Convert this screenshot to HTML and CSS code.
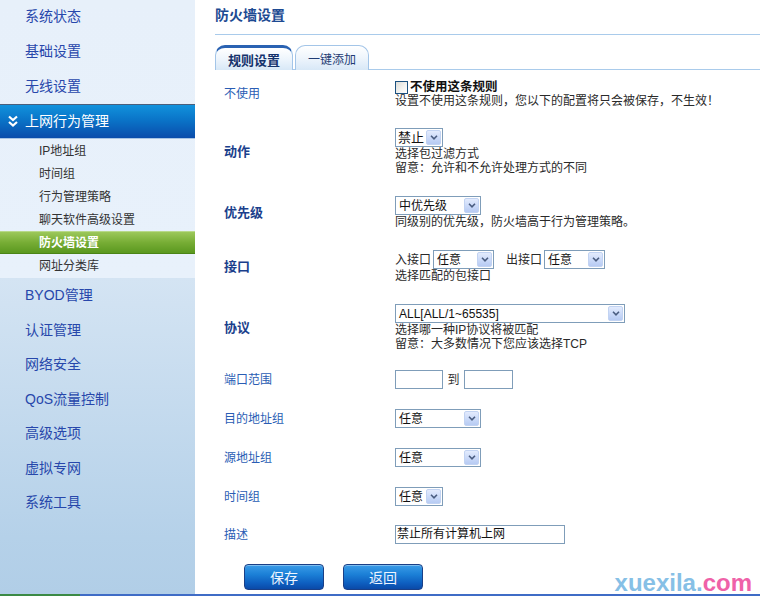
FILE: index.html
```html
<!DOCTYPE html>
<html lang="zh-CN">
<head>
<meta charset="utf-8">
<title>防火墙设置</title>
<link rel="stylesheet" href="styles.css">
</head>
<body>
<div class="page">
  <aside class="side">
    <ul class="menu menu-top">
      <li>系统状态</li>
      <li>基础设置</li>
      <li>无线设置</li>
    </ul>
    <div class="group-head">
      <svg class="dchev" width="10" height="12" viewBox="0 0 10 12"><path d="M1 1.5 L5 5 L9 1.5 M1 7 L5 10.5 L9 7" fill="none" stroke="#fff" stroke-width="2.2"/></svg>
      <span>上网行为管理</span>
    </div>
    <ul class="sub">
      <li>IP地址组</li>
      <li>时间组</li>
      <li>行为管理策略</li>
      <li>聊天软件高级设置</li>
      <li class="on">防火墙设置</li>
      <li>网址分类库</li>
    </ul>
    <ul class="menu menu-bottom">
      <li>BYOD管理</li>
      <li>认证管理</li>
      <li>网络安全</li>
      <li>QoS流量控制</li>
      <li>高级选项</li>
      <li>虚拟专网</li>
      <li>系统工具</li>
    </ul>
  </aside>

  <main class="content">
    <h1 class="title">防火墙设置</h1>
    <div class="tabs">
      <div class="tab active">规则设置</div>
      <div class="tab">一键添加</div>
    </div>

    <div class="form">
      <div class="row r1">
        <div class="label">不使用</div>
        <div class="val">
          <div class="check-line"><span class="checkbox"></span><b>不使用这条规则</b></div>
          <div>设置不使用这条规则，您以下的配置将只会被保存，不生效！</div>
        </div>
      </div>

      <div class="row r2">
        <div class="label strong">动作</div>
        <div class="val">
          <div class="sel w48"><span class="txt big">禁止</span><span class="arr"><svg width="8" height="5" viewBox="0 0 8 5"><path d="M1 0.8 L4 3.8 L7 0.8" fill="none" stroke="#4a5d80" stroke-width="1.6"/></svg></span></div>
          <div>选择包过滤方式</div>
          <div>留意：允许和不允许处理方式的不同</div>
        </div>
      </div>

      <div class="row r3">
        <div class="label strong">优先级</div>
        <div class="val">
          <div class="sel w86"><span class="txt">中优先级</span><span class="arr"><svg width="8" height="5" viewBox="0 0 8 5"><path d="M1 0.8 L4 3.8 L7 0.8" fill="none" stroke="#4a5d80" stroke-width="1.6"/></svg></span></div>
          <div>同级别的优先级，防火墙高于行为管理策略。</div>
        </div>
      </div>

      <div class="row r4">
        <div class="label strong">接口</div>
        <div class="val">
          <div class="iface">
            <span>入接口</span>
            <div class="sel w61"><span class="txt">任意</span><span class="arr"><svg width="8" height="5" viewBox="0 0 8 5"><path d="M1 0.8 L4 3.8 L7 0.8" fill="none" stroke="#4a5d80" stroke-width="1.6"/></svg></span></div>
            <span class="out">出接口</span>
            <div class="sel w61"><span class="txt">任意</span><span class="arr"><svg width="8" height="5" viewBox="0 0 8 5"><path d="M1 0.8 L4 3.8 L7 0.8" fill="none" stroke="#4a5d80" stroke-width="1.6"/></svg></span></div>
          </div>
          <div>选择匹配的包接口</div>
        </div>
      </div>

      <div class="row r5">
        <div class="label strong">协议</div>
        <div class="val">
          <div class="sel w230"><span class="txt">ALL[ALL/1~65535]</span><span class="arr"><svg width="8" height="5" viewBox="0 0 8 5"><path d="M1 0.8 L4 3.8 L7 0.8" fill="none" stroke="#4a5d80" stroke-width="1.6"/></svg></span></div>
          <div>选择哪一种IP协议将被匹配</div>
          <div>留意：大多数情况下您应该选择TCP</div>
        </div>
      </div>

      <div class="row r6">
        <div class="label">端口范围</div>
        <div class="val range">
          <span class="inp w48"></span><span class="to">到</span><span class="inp w49"></span>
        </div>
      </div>

      <div class="row r7">
        <div class="label">目的地址组</div>
        <div class="val">
          <div class="sel w86"><span class="txt">任意</span><span class="arr"><svg width="8" height="5" viewBox="0 0 8 5"><path d="M1 0.8 L4 3.8 L7 0.8" fill="none" stroke="#4a5d80" stroke-width="1.6"/></svg></span></div>
        </div>
      </div>

      <div class="row r8">
        <div class="label">源地址组</div>
        <div class="val">
          <div class="sel w86"><span class="txt">任意</span><span class="arr"><svg width="8" height="5" viewBox="0 0 8 5"><path d="M1 0.8 L4 3.8 L7 0.8" fill="none" stroke="#4a5d80" stroke-width="1.6"/></svg></span></div>
        </div>
      </div>

      <div class="row r9">
        <div class="label">时间组</div>
        <div class="val">
          <div class="sel w48"><span class="txt">任意</span><span class="arr"><svg width="8" height="5" viewBox="0 0 8 5"><path d="M1 0.8 L4 3.8 L7 0.8" fill="none" stroke="#4a5d80" stroke-width="1.6"/></svg></span></div>
        </div>
      </div>

      <div class="row r10">
        <div class="label">描述</div>
        <div class="val">
          <span class="inp w170">禁止所有计算机上网</span>
        </div>
      </div>
    </div>

    <div class="actions">
      <button class="btn">保存</button>
      <button class="btn">返回</button>
    </div>

    <div class="watermark">xuexila.<span>com</span></div>
  </main>
</div>
<div class="footer"><span class="fg"></span><span class="fb"></span></div>
</body>
</html>
```

FILE: styles.css
```css
* { box-sizing: border-box; }

html, body {
  margin: 0;
  padding: 0;
}

body {
  width: 760px;
  height: 596px;
  overflow: hidden;
  background: #fff;
  font-family: "Liberation Sans", "Noto Sans CJK SC", sans-serif;
  font-size: 12px;
  color: #222;
}

.page {
  display: flex;
  height: 594px;
}

/* ---------- sidebar ---------- */
.side {
  width: 195px;
  flex: none;
  background: linear-gradient(to bottom,
    #e7f0fa 0px, #e8f1fb 278px,
    #d4e4f3 278px, #b5d1e9 537px, #b1cee7 100%);
}

.menu {
  list-style: none;
  margin: 0;
  padding: 0;
}

.menu li {
  padding-left: 25px;
  font-size: 14px;
  color: #2747ab;
  display: flex;
  align-items: center;
}

.menu-top { margin-top: -1px; }
.menu-top li { height: 35px; padding-bottom: 4px; }
.menu-bottom li { height: 34.5px; }

.group-head {
  height: 35px;
  display: flex;
  align-items: center;
  padding-bottom: 3px;
  border-top: 1px solid #4a5f7c;
  border-bottom: 1px solid #a8c4e4;
  background: linear-gradient(to bottom, #1192dc 0%, #0a74c8 45%, #0a4cab 100%);
  color: #fff;
  font-size: 14px;
}

.dchev {
  margin-left: 8px;
  margin-right: 7px;
  margin-top: 2px;
}

.sub {
  list-style: none;
  margin: 0;
  padding: 0;
}

.sub li {
  height: 23px;
  padding-left: 39px;
  padding-bottom: 2px;
  display: flex;
  align-items: center;
  font-size: 12px;
  color: #333;
}

.sub li.on {
  color: #fff;
  font-weight: bold;
  background: linear-gradient(to bottom, #9cc85a 0%, #77ad35 50%, #5a981f 100%);
  border-top: 1px solid #b8d98a;
  border-bottom: 1px solid #4a8416;
}

/* ---------- content ---------- */
.content {
  flex: 1;
  position: relative;
  padding-left: 20px;
}

.title {
  margin: 0;
  height: 35px;
  line-height: 31px;
  font-size: 14px;
  font-weight: bold;
  color: #1d4a92;
  border-bottom: 1px solid #a9cbeb;
}

.tabs {
  margin-top: 9px;
  height: 26px;
  display: flex;
  align-items: flex-end;
  gap: 2px;
  border-bottom: 1px solid #a9cbeb;
}

.tab {
  height: 25px;
  width: 74px;
  margin-bottom: -1px;
  display: flex;
  align-items: center;
  justify-content: center;
  font-size: 12px;
  color: #1f3c74;
  border: 1px solid #a3c5e8;
  border-bottom: none;
  border-radius: 10px 10px 0 0;
  background: linear-gradient(to bottom, #ffffff 0%, #eef5fc 50%, #d8e8f7 100%);
}

.tab.active {
  width: 78px;
  font-weight: bold;
  font-size: 13px;
  color: #15336c;
  border-top: 3px solid #2a62b2;
  padding-top: 1px;
}

/* ---------- form ---------- */
.form {
  margin-top: 10px;
  margin-left: 9px;
  display: flex;
  flex-direction: column;
  gap: 20px;
}

.row {
  display: flex;
  align-items: center;
}

.r3, .r4, .r5 { margin-top: 1px; }
.r6 { margin-top: -1px; }
.r10 { margin-top: -1px; }

.label {
  width: 171px;
  flex: none;
  color: #2a5db4;
  font-size: 12px;
  line-height: 14px;
}

.label.strong {
  font-weight: bold;
  color: #1b3f8c;
  font-size: 13px;
}

.val {
  line-height: 14px;
  font-size: 12px;
  color: #2a2a2a;
}

.check-line {
  display: flex;
  align-items: center;
  height: 14px;
}

.checkbox {
  width: 13px;
  height: 13px;
  border: 1px solid #1c5180;
  background: linear-gradient(135deg, #dcdcd6 0%, #f4f4f2 60%, #fff 100%);
  margin-right: 2px;
}

.check-line b {
  font-weight: bold;
  font-size: 12.5px;
  color: #111;
}

.sel {
  height: 19px;
  display: flex;
  align-items: center;
  justify-content: space-between;
  border: 1px solid #7f9db9;
  background: #fff;
  padding: 1px;
}

.sel .txt {
  padding-left: 2px;
  font-size: 12px;
  color: #111;
  white-space: nowrap;
}

.sel .txt.big { font-size: 13px; padding-left: 1px; }

.sel .arr {
  width: 15px;
  height: 15px;
  display: flex;
  align-items: center;
  justify-content: center;
  border-radius: 2px;
  border: 1px solid #c2d3f2;
  background: linear-gradient(to bottom, #e3ebfd 0%, #c8d8f8 60%, #b7cbf3 100%);
}

.w48 { width: 48px; }
.w49 { width: 49px; }
.w61 { width: 61px; }
.w86 { width: 86px; }
.w170 { width: 170px; }
.w230 { width: 230px; }

.iface {
  display: flex;
  align-items: center;
  gap: 2px;
}

.iface .out { margin-left: 10px; }

.range {
  display: flex;
  align-items: center;
}

.inp {
  display: inline-block;
  height: 19px;
  border: 1px solid #7f9db9;
  background: #fff;
  padding-left: 1px;
  line-height: 16px;
  font-size: 12px;
  color: #111;
}

.to {
  width: 21px;
  text-align: center;
  color: #333;
}

/* ---------- buttons ---------- */
.actions {
  margin-top: 20px;
  margin-left: 29px;
  display: flex;
  gap: 19px;
}

.btn {
  width: 80px;
  height: 26px;
  padding: 0;
  border: 1px solid #1a3f86;
  border-radius: 4px;
  background: linear-gradient(to bottom, #3a9ce8 0%, #1b7fd6 40%, #0e5fc0 75%, #0a4aa8 100%);
  color: #eef5ff;
  font-family: "Liberation Sans", "Noto Sans CJK SC", sans-serif;
  font-size: 14px;
  box-shadow: inset 0 1px 0 rgba(255,255,255,0.35);
}

/* ---------- watermark ---------- */
.watermark {
  position: absolute;
  right: 8px;
  bottom: -3px;
  font-family: "Liberation Sans", sans-serif;
  font-weight: bold;
  font-size: 24px;
  color: #86c0e6;
  letter-spacing: 0;
}

.watermark span { color: #ef62a8; }

/* ---------- footer ---------- */
.footer {
  height: 2px;
  display: flex;
}

.fg { width: 80px; background: #3b8a45; }
.fb { flex: 1; background: #3f6cc6; }
```
